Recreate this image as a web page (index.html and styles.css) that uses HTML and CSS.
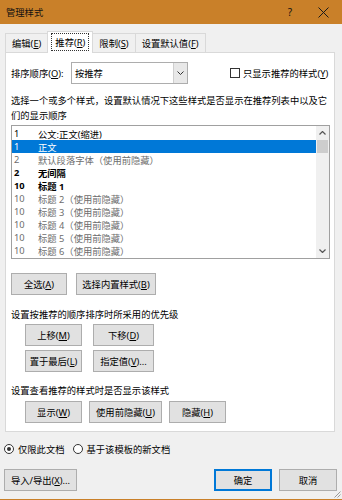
FILE: index.html
```html
<!DOCTYPE html>
<html lang="zh-CN">

<head>
  <meta charset="UTF-8" />
  <meta name="viewport" content="width=device-width, initial-scale=1" />
  <title>管理样式</title>
  <link rel="stylesheet" href="styles.css">
</head>

<body>
  <div class="window">
    <div class="titlebar">
      <span class="title">管理样式</span>
      <span class="help">?</span>
      <span class="close">
        <svg width="11" height="11" viewBox="0 0 11 11">
          <path d="M0.5 0.5 L10.5 10.5 M10.5 0.5 L0.5 10.5" stroke="#1a1a1a" stroke-width="1" fill="none" />
        </svg>
      </span>
    </div>

    <div class="tabs">
      <div class="tab">编辑(<u>E</u>)</div>
      <div class="tab active"><span class="focus">推荐(<u>R</u>)</span></div>
      <div class="tab">限制(<u>S</u>)</div>
      <div class="tab">设置默认值(<u>F</u>)</div>
    </div>

    <div class="panel">
      <div class="sort-row">
        <label class="sort-label">排序顺序(<u>O</u>):</label>
        <div class="combo">
          <span class="combo-value">按推荐</span>
          <span class="combo-arrow">
            <svg width="7" height="4" viewBox="0 0 7 4">
              <path d="M0.5 0.5 L3.5 3.5 L6.5 0.5" stroke="#333" stroke-width="1" fill="none" />
            </svg>
          </span>
        </div>
        <label class="check">
          <span class="box"></span>
          只显示推荐的样式(<u>Y</u>)
        </label>
      </div>

      <p class="desc">选择一个或多个样式，设置默认情况下这些样式是否显示在推荐列表中以及它们的显示顺序</p>

      <div class="listbox">
        <ul class="styles">
          <li><span class="num">1</span>公文:正文(缩进)</li>
          <li class="selected"><span class="num">1</span>正文</li>
          <li class="hidden"><span class="num">2</span>默认段落字体（使用前隐藏）</li>
          <li class="strong"><span class="num">2</span>无间隔</li>
          <li class="strong"><span class="num">10</span>标题 1</li>
          <li class="hidden"><span class="num">10</span>标题 2（使用前隐藏）</li>
          <li class="hidden"><span class="num">10</span>标题 3（使用前隐藏）</li>
          <li class="hidden"><span class="num">10</span>标题 4（使用前隐藏）</li>
          <li class="hidden"><span class="num">10</span>标题 5（使用前隐藏）</li>
          <li class="hidden"><span class="num">10</span>标题 6（使用前隐藏）</li>
        </ul>
        <div class="scrollbar">
          <span class="scroll-btn">
            <svg width="7" height="4" viewBox="0 0 7 4">
              <path d="M0.5 3.5 L3.5 0.5 L6.5 3.5" stroke="#555" stroke-width="1.2" fill="none" />
            </svg>
          </span>
          <span class="thumb"></span>
          <span class="track"></span>
          <span class="scroll-btn">
            <svg width="7" height="4" viewBox="0 0 7 4">
              <path d="M0.5 0.5 L3.5 3.5 L6.5 0.5" stroke="#555" stroke-width="1.2" fill="none" />
            </svg>
          </span>
        </div>
      </div>

      <div class="btn-row top-buttons">
        <button class="btn w-all">全选(<u>A</u>)</button>
        <button class="btn w-builtin">选择内置样式(<u>B</u>)</button>
      </div>

      <p class="hint">设置按推荐的顺序排序时所采用的优先级</p>
      <div class="btn-grid">
        <button class="btn">上移(<u>M</u>)</button>
        <button class="btn">下移(<u>D</u>)</button>
        <button class="btn">置于最后(<u>L</u>)</button>
        <button class="btn">指定值(<u>V</u>)...</button>
      </div>

      <p class="hint second">设置查看推荐的样式时是否显示该样式</p>
      <div class="btn-row indent">
        <button class="btn w-show">显示(<u>W</u>)</button>
        <button class="btn w-hideuse">使用前隐藏(<u>U</u>)</button>
        <button class="btn w-show">隐藏(<u>H</u>)</button>
      </div>
    </div>

    <div class="scope">
      <label class="radio"><span class="dot checked"></span>仅限此文档</label>
      <label class="radio"><span class="dot"></span>基于该模板的新文档</label>
    </div>

    <div class="footer">
      <button class="btn w-import">导入/导出(<u>X</u>)...</button>
      <div class="footer-right">
        <button class="btn w-ok default">确定</button>
        <button class="btn w-ok">取消</button>
      </div>
    </div>

    <svg class="grip" width="7" height="7" viewBox="0 0 7 7">
      <path d="M6.5 0.5 L0.5 6.5 M6.5 3.5 L3.5 6.5" stroke="#9a9a9a" stroke-width="1" fill="none" />
    </svg>
  </div>
</body>

</html>
```

FILE: styles.css
```css
body {
  margin: 0;
  font-family: "Noto Sans", "Noto Sans CJK SC", sans-serif;
  font-size: 9.3px;
  color: #000;
  background-color: #f0f0f0;
}

u {
  text-decoration-thickness: 1px;
  text-underline-offset: 1px;
}

.window {
  position: relative;
  width: 342px;
  height: 500px;
  box-sizing: border-box;
  background-color: #f0f0f0;
  border-bottom: 1px solid #c98029;
  overflow: hidden;
}

.titlebar {
  display: flex;
  align-items: center;
  height: 24px;
  padding-left: 6px;
  background-color: #c98029;
  color: #111;
}

.title {
  flex: 1;
}

.help {
  width: 12px;
  margin-right: 22px;
  font-size: 10px;
  text-align: center;
}

.close {
  display: flex;
  width: 11px;
  margin-right: 13px;
}

/* tabs */

.tabs {
  display: flex;
  align-items: flex-end;
  height: 21px;
  margin-top: 7px;
  padding-left: 5px;
}

.tab {
  display: flex;
  align-items: center;
  height: 19px;
  box-sizing: border-box;
  padding: 0 6px;
  border: 1px solid #d9d9d9;
  border-bottom: none;
  margin-right: -1px;
  white-space: nowrap;
}

.tab.active {
  position: relative;
  height: 22px;
  margin-bottom: -1px;
  padding: 0 3px 1px;
  background-color: #fff;
  z-index: 1;
}

.focus {
  padding: 1px 3px;
  border: 1px dotted #333;
}

/* panel */

.panel {
  width: 330px;
  height: 380px;
  box-sizing: border-box;
  margin-left: 5px;
  padding: 9px 4px 0 5px;
  background-color: #fff;
  border: 1px solid #d9d9d9;
}

.sort-row {
  display: flex;
  align-items: center;
  height: 22px;
  white-space: nowrap;
}

.sort-label {
  width: 60px;
}

.combo {
  display: flex;
  width: 117px;
  height: 22px;
  box-sizing: border-box;
  border: 1px solid #adadad;
}

.combo-value {
  flex: 1;
  display: flex;
  align-items: center;
  padding-left: 3px;
}

.combo-arrow {
  display: flex;
  align-items: center;
  justify-content: center;
  width: 13px;
  background-color: #e8e8e8;
  border-left: 1px solid #cfcfcf;
}

.check {
  display: flex;
  align-items: center;
  margin-left: 42px;
}

.box {
  width: 10px;
  height: 10px;
  box-sizing: border-box;
  margin-right: 3px;
  border: 1px solid #333;
  background-color: #fff;
}

.desc {
  margin: 9px -4px 2px 0;
  line-height: 15px;
}

/* list */

.listbox {
  display: flex;
  width: 319px;
  height: 134px;
  box-sizing: border-box;
  border: 1px solid #a0a0a0;
}

.styles {
  flex: 1;
  margin: 0;
  padding: 1px 0 0;
  list-style: none;
}

.styles li {
  display: flex;
  align-items: center;
  height: 13px;
  padding-left: 2px;
  white-space: nowrap;
}

.styles .num {
  width: 24px;
}

.styles li.selected {
  background-color: #0078d7;
  color: #fff;
}

.styles li.hidden {
  color: #6d6d6d;
}

.styles li.strong {
  font-weight: bold;
}

.scrollbar {
  display: flex;
  flex-direction: column;
  width: 13px;
  background-color: #f0f0f0;
}

.scroll-btn {
  display: flex;
  align-items: center;
  justify-content: center;
  height: 14px;
}

.thumb {
  height: 13px;
  margin: 0 1px;
  background-color: #cdcdcd;
}

.track {
  flex: 1;
}

/* buttons */

.btn {
  display: flex;
  align-items: center;
  justify-content: center;
  height: 22px;
  box-sizing: border-box;
  padding: 0;
  font-family: inherit;
  font-size: 9.3px;
  color: #000;
  background-color: #e1e1e1;
  border: 1px solid #adadad;
  border-radius: 0;
  white-space: nowrap;
}

.btn-row {
  display: flex;
  gap: 9px;
}

.top-buttons {
  margin-top: 14px;
}

.w-all {
  width: 56px;
}

.w-builtin {
  width: 80px;
}

.hint {
  margin: 12px 0 2px;
  line-height: 15px;
}

.hint.second {
  margin: 11px 0 3px;
}

.btn-grid {
  display: grid;
  grid-template-columns: 57px 61px;
  gap: 4px 11px;
  padding-left: 14px;
}

.btn-row.indent {
  gap: 7px;
  padding-left: 14px;
}

.w-show {
  width: 57px;
}

.w-hideuse {
  width: 73px;
}

/* bottom */

.scope {
  display: flex;
  align-items: center;
  height: 14px;
  margin-top: 10px;
  padding-left: 4px;
  white-space: nowrap;
}

.radio {
  display: flex;
  align-items: center;
  margin-right: 8px;
}

.dot {
  position: relative;
  width: 10px;
  height: 10px;
  box-sizing: border-box;
  margin-right: 4px;
  border: 1px solid #333;
  border-radius: 50%;
  background-color: #fff;
}

.dot.checked::after {
  content: "";
  position: absolute;
  top: 2px;
  left: 2px;
  width: 4px;
  height: 4px;
  border-radius: 50%;
  background-color: #333;
}

.footer {
  display: flex;
  justify-content: space-between;
  margin-top: 13px;
  padding: 0 5px 0 4px;
}

.footer-right {
  display: flex;
  gap: 7px;
}

.w-import {
  width: 73px;
}

.w-ok {
  width: 58px;
}

.btn.default {
  border: 2px solid #0078d7;
}

.grip {
  position: absolute;
  right: 1px;
  bottom: 1px;
}
```
